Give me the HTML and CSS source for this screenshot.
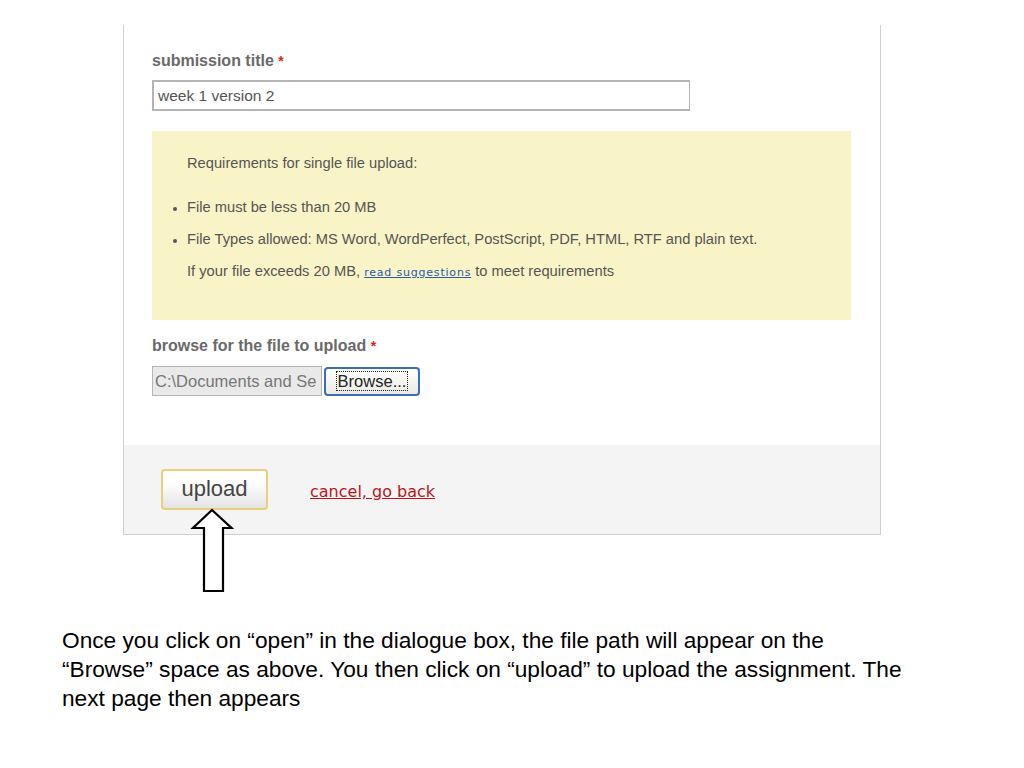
FILE: index.html
```html
<!DOCTYPE html>
<html>
<head>
<meta charset="utf-8">
<link rel="stylesheet" href="styles.css">
</head>
<body>
<div class="page">
  <div class="panel">
    <div class="form">
      <div class="label">submission title <span class="req">*</span></div>
      <div class="text-input">week 1 version 2</div>
      <div class="notice">
        <p class="notice-head">Requirements for single file upload:</p>
        <ul class="notice-list">
          <li>File must be less than 20 MB</li>
          <li>File Types allowed: MS Word, WordPerfect, PostScript, PDF, HTML, RTF and plain text.</li>
        </ul>
        <p class="notice-foot">If your file exceeds 20 MB, <a class="small-link" href="#">read suggestions</a> to meet requirements</p>
      </div>
      <div class="label label-file">browse for the file to upload <span class="req">*</span></div>
      <div class="file-row">
        <div class="file-path">C:\Documents and Se</div>
        <div class="browse-btn"><span class="browse-focus">Browse...</span></div>
      </div>
    </div>
    <div class="footer">
      <div class="upload-btn">upload</div>
      <a class="cancel" href="#">cancel, go back</a>
    </div>
    <svg class="arrow" width="50" height="86" viewBox="0 0 50 86">
      <polygon points="22,2 41.5,20 33,20 33,83 14,83 14,20 3,20" fill="#fff" stroke="#000" stroke-width="2.2" stroke-linejoin="miter"/>
    </svg>
  </div>
  <p class="caption">Once you click on “open” in the dialogue box, the file path will appear on the “Browse” space as above. You then click on “upload” to upload the assignment. The next page then appears</p>
</div>
</body>
</html>
```

FILE: styles.css
```css
html, body {
  margin: 0;
  padding: 0;
  background: #fff;
}
.page {
  width: 1024px;
  height: 768px;
  padding-top: 25px;
  box-sizing: border-box;
}
.panel {
  position: relative;
  margin-left: 123px;
  width: 758px;
  box-sizing: border-box;
  border-left: 1px solid #d0d0d0;
  border-right: 1px solid #d0d0d0;
  border-bottom: 1px solid #cfcfcf;
  font-family: "Liberation Sans", Arial, sans-serif;
  color: #555;
}
.form {
  padding: 27px 28px 49px 28px;
}
.label {
  font-weight: bold;
  font-size: 16px;
  color: #6a6a6a;
  line-height: 18px;
}
.req {
  color: #e21c1c;
  font-size: 14px;
}
.text-input {
  margin-top: 10px;
  width: 538px;
  height: 31px;
  box-sizing: border-box;
  border: 2px solid #b4b4b4;
  border-width: 2px 1px 2px 2px;
  padding: 5px 0 0 4px;
  font-size: 15.5px;
  color: #555;
}
.notice {
  margin-top: 20px;
  width: 699px;
  height: 189px;
  box-sizing: border-box;
  background: #f9f4c7;
  padding: 23px 0 0 0;
  font-size: 14.7px;
  color: #555;
}
.notice p {
  margin: 0;
  padding-left: 35px;
  line-height: 18px;
}
.notice-list {
  margin: 26px 0 0 0;
  padding-left: 35px;
  line-height: 18px;
}
.notice-list li {
  margin-bottom: 14px;
}
.notice-list li::marker {
  font-size: 12px;
}
.notice-foot {
  margin-top: 4px !important;
}
.small-link {
  font-family: "DejaVu Sans", Verdana, sans-serif;
  font-size: 11px;
  color: #2a5aa8;
  letter-spacing: 0.8px;
  text-decoration: underline;
}
.label-file {
  margin-top: 17px;
}
.file-row {
  margin-top: 11px;
  display: flex;
  align-items: center;
  gap: 2px;
}
.file-path {
  width: 170px;
  height: 30px;
  box-sizing: border-box;
  background: #e9e9e9;
  border: 1px solid #b5b5b5;
  padding: 5px 0 0 2px;
  font-size: 16.5px;
  color: #777;
  overflow: hidden;
  white-space: nowrap;
}
.browse-btn {
  width: 96px;
  height: 29px;
  box-sizing: border-box;
  border: 2px solid #3f6cb8;
  border-radius: 4px;
  background: linear-gradient(#ffffff, #ebebe4);
  display: flex;
  align-items: center;
  justify-content: center;
  font-size: 16.5px;
  color: #222;
}
.browse-focus {
  border: 1px dotted #222;
  padding: 0 1px;
  line-height: 18px;
}
.footer {
  background: #f4f4f4;
  height: 89px;
  display: flex;
  align-items: center;
  padding: 0 0 0 37px;
  box-sizing: border-box;
  gap: 42px;
}
.upload-btn {
  width: 107px;
  height: 41px;
  box-sizing: border-box;
  border: 2px solid #e9cf79;
  border-radius: 4px;
  background: linear-gradient(#ffffff 30%, #e4e4e4);
  font-size: 22px;
  color: #444;
  display: flex;
  align-items: center;
  justify-content: center;
  padding-bottom: 2px;
}
.cancel {
  color: #b8161b;
  font-family: "DejaVu Sans", Verdana, sans-serif;
  font-size: 16px;
  text-decoration: underline;
  margin-top: 4px;
}
.arrow {
  position: absolute;
  left: 66px;
  top: 483px;
}
.caption {
  margin: 91px 0 0 62px;
  width: 850px;
  font-family: "Liberation Sans", Arial, sans-serif;
  font-size: 22.7px;
  line-height: 29px;
  color: #000;
}
```
